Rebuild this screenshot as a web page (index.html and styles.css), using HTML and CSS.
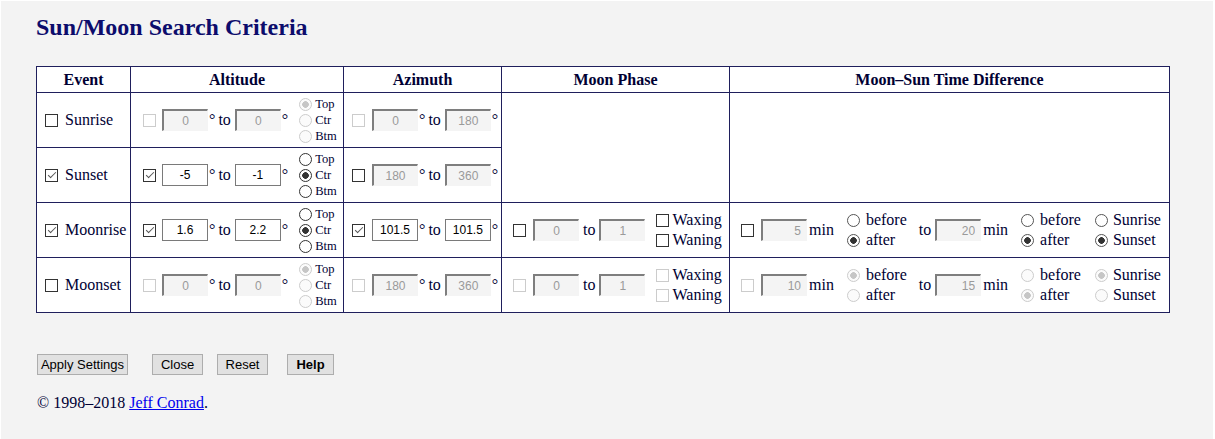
FILE: index.html
```html
<!DOCTYPE html>
<html lang="en">
<head>
<meta charset="utf-8">
<title>Sun/Moon Search Criteria</title>
<link rel="stylesheet" href="styles.css">
</head>
<body>
<div class="page">
  <h1 class="title">Sun/Moon Search Criteria</h1>
  <table class="criteria">
    <colgroup>
      <col class="c-event"><col class="c-alt"><col class="c-az"><col class="c-phase"><col class="c-diff">
    </colgroup>
    <thead>
      <tr><th>Event</th><th>Altitude</th><th>Azimuth</th><th>Moon Phase</th><th>Moon–Sun Time Difference</th></tr>
    </thead>
    <tbody>
      <tr>
        <td><label class="ctl ev"><input type="checkbox" class="cb"><span class="evname">Sunrise</span></label></td>
        <td><div class="ctl alt">
          <input type="checkbox" class="cb" disabled>
          <input type="text" class="num" value="0" disabled><span class="deg">°</span><span class="to">to</span><input type="text" class="num" value="0" disabled><span class="deg">°</span>
          <div class="rstack small">
            <label><input type="radio" class="rd" name="a1" checked disabled><span>Top</span></label>
            <label><input type="radio" class="rd" name="a1" disabled><span>Ctr</span></label>
            <label><input type="radio" class="rd" name="a1" disabled><span>Btm</span></label>
          </div>
        </div></td>
        <td><div class="ctl az">
          <input type="checkbox" class="cb" disabled>
          <input type="text" class="num" value="0" disabled><span class="deg">°</span><span class="to">to</span><input type="text" class="num" value="180" disabled><span class="deg">°</span>
        </div></td>
        <td rowspan="2"></td>
        <td rowspan="2"></td>
      </tr>
      <tr>
        <td><label class="ctl ev"><input type="checkbox" class="cb" checked><span class="evname">Sunset</span></label></td>
        <td><div class="ctl alt">
          <input type="checkbox" class="cb" checked>
          <input type="text" class="num" value="-5"><span class="deg">°</span><span class="to">to</span><input type="text" class="num" value="-1"><span class="deg">°</span>
          <div class="rstack small">
            <label><input type="radio" class="rd" name="a2"><span>Top</span></label>
            <label><input type="radio" class="rd" name="a2" checked><span>Ctr</span></label>
            <label><input type="radio" class="rd" name="a2"><span>Btm</span></label>
          </div>
        </div></td>
        <td><div class="ctl az">
          <input type="checkbox" class="cb">
          <input type="text" class="num" value="180" disabled><span class="deg">°</span><span class="to">to</span><input type="text" class="num" value="360" disabled><span class="deg">°</span>
        </div></td>
      </tr>
      <tr>
        <td><label class="ctl ev"><input type="checkbox" class="cb" checked><span class="evname">Moonrise</span></label></td>
        <td><div class="ctl alt">
          <input type="checkbox" class="cb" checked>
          <input type="text" class="num" value="1.6"><span class="deg">°</span><span class="to">to</span><input type="text" class="num" value="2.2"><span class="deg">°</span>
          <div class="rstack small">
            <label><input type="radio" class="rd" name="a3"><span>Top</span></label>
            <label><input type="radio" class="rd" name="a3" checked><span>Ctr</span></label>
            <label><input type="radio" class="rd" name="a3"><span>Btm</span></label>
          </div>
        </div></td>
        <td><div class="ctl az">
          <input type="checkbox" class="cb" checked>
          <input type="text" class="num" value="101.5"><span class="deg">°</span><span class="to">to</span><input type="text" class="num" value="101.5"><span class="deg">°</span>
        </div></td>
        <td><div class="ctl phase">
          <input type="checkbox" class="cb">
          <input type="text" class="num" value="0" disabled><span class="to">to</span><input type="text" class="num" value="1" disabled>
          <div class="cstack">
            <label><input type="checkbox" class="cb"><span>Waxing</span></label>
            <label><input type="checkbox" class="cb"><span>Waning</span></label>
          </div>
        </div></td>
        <td><div class="ctl diff">
          <input type="checkbox" class="cb">
          <input type="text" class="num right" value="5" disabled><span class="min">min</span>
          <div class="rstack big s1">
            <label><input type="radio" class="rd lt" name="d3a"><span>before</span></label>
            <label><input type="radio" class="rd lt" name="d3a" checked><span>after</span></label>
          </div>
          <span class="to2">to</span><input type="text" class="num right" value="20" disabled><span class="min">min</span>
          <div class="rstack big s2">
            <label><input type="radio" class="rd lt" name="d3b"><span>before</span></label>
            <label><input type="radio" class="rd lt" name="d3b" checked><span>after</span></label>
          </div>
          <div class="rstack big s3">
            <label><input type="radio" class="rd lt" name="d3c"><span>Sunrise</span></label>
            <label><input type="radio" class="rd lt" name="d3c" checked><span>Sunset</span></label>
          </div>
        </div></td>
      </tr>
      <tr>
        <td><label class="ctl ev"><input type="checkbox" class="cb"><span class="evname">Moonset</span></label></td>
        <td><div class="ctl alt">
          <input type="checkbox" class="cb" disabled>
          <input type="text" class="num" value="0" disabled><span class="deg">°</span><span class="to">to</span><input type="text" class="num" value="0" disabled><span class="deg">°</span>
          <div class="rstack small">
            <label><input type="radio" class="rd" name="a4" checked disabled><span>Top</span></label>
            <label><input type="radio" class="rd" name="a4" disabled><span>Ctr</span></label>
            <label><input type="radio" class="rd" name="a4" disabled><span>Btm</span></label>
          </div>
        </div></td>
        <td><div class="ctl az">
          <input type="checkbox" class="cb" disabled>
          <input type="text" class="num" value="180" disabled><span class="deg">°</span><span class="to">to</span><input type="text" class="num" value="360" disabled><span class="deg">°</span>
        </div></td>
        <td><div class="ctl phase">
          <input type="checkbox" class="cb" disabled>
          <input type="text" class="num" value="0" disabled><span class="to">to</span><input type="text" class="num" value="1" disabled>
          <div class="cstack">
            <label><input type="checkbox" class="cb" disabled><span>Waxing</span></label>
            <label><input type="checkbox" class="cb" disabled><span>Waning</span></label>
          </div>
        </div></td>
        <td><div class="ctl diff">
          <input type="checkbox" class="cb" disabled>
          <input type="text" class="num right" value="10" disabled><span class="min">min</span>
          <div class="rstack big s1">
            <label><input type="radio" class="rd lt" name="d4a" checked disabled><span>before</span></label>
            <label><input type="radio" class="rd lt" name="d4a" disabled><span>after</span></label>
          </div>
          <span class="to2">to</span><input type="text" class="num right" value="15" disabled><span class="min">min</span>
          <div class="rstack big s2">
            <label><input type="radio" class="rd lt" name="d4b" disabled><span>before</span></label>
            <label><input type="radio" class="rd lt" name="d4b" checked disabled><span>after</span></label>
          </div>
          <div class="rstack big s3">
            <label><input type="radio" class="rd lt" name="d4c" checked disabled><span>Sunrise</span></label>
            <label><input type="radio" class="rd lt" name="d4c" disabled><span>Sunset</span></label>
          </div>
        </div></td>
      </tr>
    </tbody>
  </table>
  <div class="actions">
    <button type="button" class="btn btn-apply">Apply Settings</button>
    <button type="button" class="btn btn-close">Close</button>
    <button type="button" class="btn btn-reset">Reset</button>
    <button type="button" class="btn btn-help">Help</button>
  </div>
  <p class="copy">© 1998–2018 <a href="#">Jeff Conrad</a>.</p>
</div>
</body>
</html>
```

FILE: styles.css
```css
html {
  background: #ffffff;
}

body {
  margin: 0;
  font-family: "Liberation Serif", "Times New Roman", serif;
  font-size: 16px;
  color: #000033;
}

.page {
  margin: 1px 2px 0 1px;
  padding: 12px 0 0 35px;
  height: 438px;
  box-sizing: border-box;
  background: #f3f3f3;
}

.title {
  margin: 0;
  font-size: 24px;
  line-height: 28px;
  font-weight: bold;
  color: #0c0c6c;
}

.criteria {
  margin-top: 25px;
  border-collapse: collapse;
  table-layout: fixed;
  width: 1134px;
  background: #ffffff;
}

.c-event { width: 94px; }
.c-alt { width: 213px; }
.c-az { width: 158px; }
.c-phase { width: 228px; }
.c-diff { width: 440px; }

.criteria th,
.criteria td {
  border: 1px solid #1f1f5c;
  padding: 0;
}

.criteria th {
  height: 25px;
  font-size: 16px;
  font-weight: bold;
  text-align: center;
  vertical-align: middle;
}

.criteria td {
  height: 54px;
  vertical-align: middle;
}

.ctl {
  display: flex;
  align-items: center;
}

.ev { padding-left: 8px; }
.ev .evname { margin-left: 7px; }
.alt { padding-left: 12px; }
.az { padding-left: 8px; }
.phase { padding-left: 11px; }
.diff { padding-left: 11px; }

/* text fields */
.num {
  box-sizing: border-box;
  width: 46px;
  height: 22px;
  margin: 0;
  padding: 0 2px;
  font: 12px "Liberation Sans", Arial, sans-serif;
  text-align: center;
  color: #000000;
  background: #ffffff;
  border: 1px solid #7a7a7a;
  flex: none;
}

.num:disabled {
  color: #9a9a9a;
  background: #f4f4f4;
  border-style: solid;
  border-width: 2px 1px 1px 2px;
  border-color: #7e7e7e #f4f4f4 #f4f4f4 #7e7e7e;
}

.num.right {
  text-align: right;
  padding-right: 5px;
}

.cb + .num { margin-left: 6px; }
.az .cb + .num,
.phase .cb + .num,
.diff .cb + .num { margin-left: 7px; }

.deg { margin-left: 1px; }
.to { margin: 0 4px 0 3px; }
.phase .to { margin: 0 4px 0 4px; }
.min { margin-left: 2px; }
.to2 { margin: 0 4px 0 12px; }

/* checkboxes & radios */
.cb,
.rd {
  -webkit-appearance: none;
  appearance: none;
  box-sizing: border-box;
  width: 13px;
  height: 13px;
  margin: 0;
  border: 1px solid #333333;
  background: #ffffff;
  position: relative;
  flex: none;
}

.cb:checked::after {
  content: "";
  position: absolute;
  left: 3.5px;
  top: 0.5px;
  width: 3px;
  height: 7px;
  border: solid #555555;
  border-width: 0 1.5px 1.5px 0;
  transform: rotate(45deg);
}

.cb:disabled {
  border-color: #cccccc;
}

.rd {
  border-radius: 50%;
}

.rd.lt {
  border-color: #555555;
}

.rd:checked {
  background: radial-gradient(circle, #333333 0 3px, #ffffff 3.6px);
}

.rd:disabled {
  border-color: #cccccc;
  background: #fbfbfb;
}

.rd:disabled:checked {
  background: radial-gradient(circle, #c6c6c6 0 3px, #fbfbfb 3.6px);
}

.rstack,
.cstack {
  display: flex;
  flex-direction: column;
}

.rstack label,
.cstack label {
  display: flex;
  align-items: center;
}

.rstack.small {
  margin-left: 11px;
  font-size: 12.5px;
}

.rstack.small label {
  height: 16px;
}

.rstack.small label span {
  margin-left: 3px;
}

.cstack {
  margin-left: 11px;
}

.cstack label,
.rstack.big label {
  height: 20px;
}

.cstack label span {
  margin-left: 3px;
}

.rstack.big label span {
  margin-left: 6px;
}

.rstack.s1,
.rstack.s2 {
  margin-left: 13px;
}

.rstack.s3 {
  margin-left: 14px;
}

.rstack.s3 label span {
  margin-left: 5px;
}

/* buttons */
.actions {
  display: flex;
  margin: 41px 0 0 1px;
}

.btn {
  box-sizing: border-box;
  height: 21px;
  margin: 0;
  padding: 0;
  font: 13px "Liberation Sans", Arial, sans-serif;
  color: #000000;
  background: #e1e1e1;
  border: 1px solid #adadad;
  border-radius: 0;
}

.btn-apply { width: 91px; margin-right: 24px; }
.btn-close { width: 51px; margin-right: 14px; }
.btn-reset { width: 51px; margin-right: 19px; }
.btn-help { width: 47px; font-weight: bold; }

.copy {
  margin: 19px 0 0 1px;
  font-size: 16px;
  line-height: 18px;
}

.copy a {
  color: #0000ee;
}
```
